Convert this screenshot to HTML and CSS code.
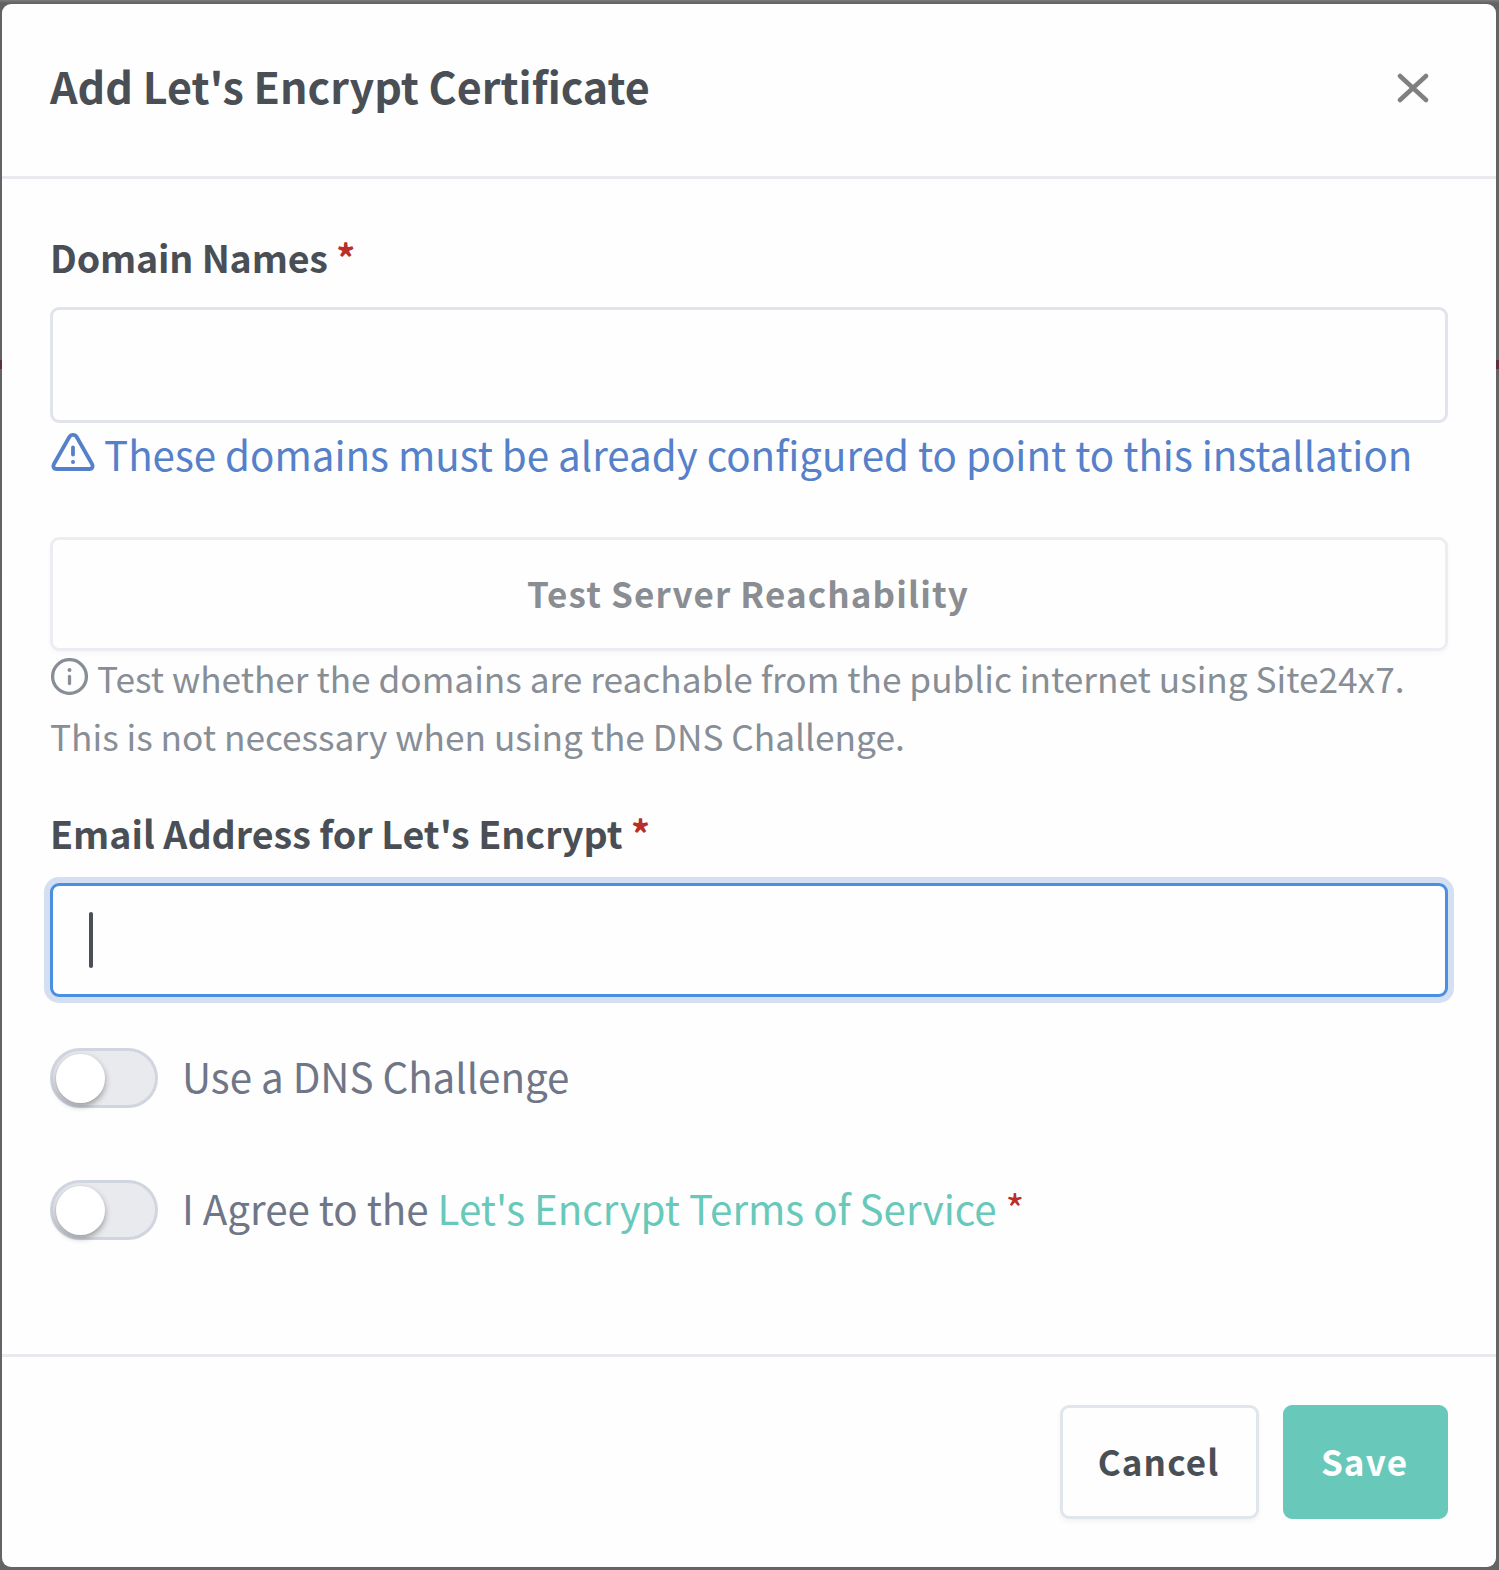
FILE: index.html
```html
<!DOCTYPE html>
<html lang="en">
<head>
<meta charset="utf-8">
<title>Add Let's Encrypt Certificate</title>
<link rel="stylesheet" href="styles.css">
</head>
<body>
<main class="dialog">
  <header class="dialog-header">
    <h1 class="dialog-title">Add Let's Encrypt Certificate</h1>
    <svg class="close" viewBox="0 0 32 30" aria-label="Close"><path d="M3 3 29 27M29 3 3 27"/></svg>
  </header>
  <section class="dialog-body">
    <div class="label label-domains">Domain Names <span class="required">*</span></div>
    <div class="input"></div>
    <p class="warning"><svg class="warning-icon" viewBox="0 0 44 39"><path d="M18.3 4 3.1 30.8C1.6 33.4 2.7 36 5.5 36H38.5C41.3 36 42.4 33.4 40.9 30.8L25.7 4C24 1.2 20 1.2 18.3 4Z"/><path d="M22 14.5V21.5"/><circle cx="22" cy="29" r="2"/></svg><span>These domains must be already configured to point to this installation</span></p>
    <div class="button button-wide">Test Server Reachability</div>
    <p class="help"><svg class="info-icon" viewBox="0 0 37 37"><circle class="ring" cx="18.5" cy="18.5" r="16.9"/><path d="M18.5 18.5V25.5"/><circle class="dot" cx="18.5" cy="12" r="2"/></svg>Test whether the domains are reachable from the public internet using Site24x7.<br>This is not necessary when using the DNS Challenge.</p>
    <div class="label label-email">Email Address for Let's Encrypt <span class="required">*</span></div>
    <div class="input input-focus"><span class="caret"></span></div>
    <div class="toggle-row"><span class="toggle"><span class="knob"></span></span><span class="toggle-label">Use a DNS Challenge</span></div>
    <div class="toggle-row"><span class="toggle"><span class="knob"></span></span><span class="toggle-label">I Agree to the <a class="link">Let's Encrypt Terms of Service</a> <span class="required">*</span></span></div>
  </section>
  <footer class="dialog-footer">
    <div class="button button-cancel">Cancel</div>
    <div class="button button-save">Save</div>
  </footer>
</main>
</body>
</html>
```
FILE: styles.css
```css
* { box-sizing: border-box; }
body {
  margin: 0;
  height: 1570px;
  padding: 4px 3px 3px 2px;
  overflow: hidden;
  background:
    linear-gradient(#5e2f42, #5e2f42) 0 360px / 100% 9px no-repeat,
    linear-gradient(#7c7c7c 0, #636363 3px, #646464 100%);
  font-family: "Noto Sans CJK SC", "Noto Sans", sans-serif;
  color: #4a4f56;
}
h1, p { margin: 0; font-weight: 400; }
.dialog {
  height: 1563px;
  display: flex;
  flex-direction: column;
  background: #fefefe;
  border-radius: 9px;
}
.dialog-header {
  height: 175px;
  padding: 50px 67px 0 48px;
  display: flex;
  justify-content: space-between;
  border-bottom: 3px solid #e9eaee;
}
.dialog-title { font-size: 43px; line-height: 62px; font-weight: 700; white-space: nowrap; }
.close {
  width: 32px;
  height: 30px;
  margin-top: 19px;
  fill: none;
  stroke: #808080;
  stroke-width: 4.5;
  stroke-linecap: round;
}
.dialog-body { height: 1175px; padding: 47px 48px 0; }
.label { font-size: 37.6px; line-height: 61px; font-weight: 700; margin-bottom: 20px; white-space: nowrap; }
.label-domains { letter-spacing: -.17px; }
.label-email { margin-top: 37px; }
.required { color: #b92e28; }
.input {
  height: 116px;
  border: 3px solid #e1e5eb;
  border-radius: 9px;
  background: #fefefe;
}
.input-focus {
  height: 114px;
  padding: 26px 36px;
  border-color: #4a90e2;
  box-shadow: 0 0 0 6px #d5dff2;
}
.caret { display: block; width: 4px; height: 56px; border-radius: 2px; background: #4a4f56; }
.warning {
  margin-top: 1px;
  display: flex;
  gap: 9.5px;
  font-size: 40.3px;
  line-height: 59px;
  letter-spacing: -.012px;
  color: #5580ca;
  white-space: nowrap;
}
.warning-icon { width: 44px; height: 39px; margin: 9px 0 0 .5px; flex: none; fill: none; stroke: currentColor; stroke-width: 3.8; stroke-linecap: round; stroke-linejoin: round; }
.warning-icon circle { fill: currentColor; stroke: none; }
.button {
  height: 114px;
  display: flex;
  align-items: center;
  justify-content: center;
  padding: 0 2px 3px 0;
  border: 3px solid #e1e5ec;
  border-radius: 9px;
  font-size: 35px;
  line-height: 51px;
  font-weight: 700;
  letter-spacing: 1.125px;
  box-shadow: 0 3px 4px rgba(40, 50, 80, .05);
}
.button-wide { margin-top: 54px; border-color: #ecedf3; color: #8a8d92; box-shadow: 0 3px 4px rgba(40, 50, 80, .03); }
.help {
  margin-top: -2px;
  font-size: 35.25px;
  line-height: 58px;
  letter-spacing: -.01px;
  color: #878e96;
  white-space: nowrap;
}
.info-icon { display: inline-block; width: 37px; height: 37px; margin: 0 9px 0 1px; vertical-align: -2px; fill: none; stroke: currentColor; stroke-width: 3.3; stroke-linecap: round; }
.info-icon .dot { fill: currentColor; stroke: none; }
.toggle-row {
  height: 60px;
  margin-top: 51px;
  display: flex;
  gap: 24px;
  align-items: flex-start;
}
.toggle-row + .toggle-row { margin-top: 72px; }
.toggle { width: 108px; height: 60px; padding: 2.5px; border: 3px solid #d0d5e0; border-radius: 30px; background: #e9eaee; }
.knob { display: block; width: 49px; height: 49px; border-radius: 50%; background: #fff; box-shadow: 0 3px 6px rgba(0, 0, 0, .36); }
.toggle-label { font-size: 40.3px; line-height: 55px; letter-spacing: -.025px; color: #6f7687; white-space: nowrap; }
.link { color: #68c9ba; }
.dialog-footer {
  height: 213px;
  padding: 48px;
  display: flex;
  justify-content: flex-end;
  gap: 24px;
  border-top: 3px solid #e9eaee;
}
.button-cancel { width: 199px; }
.button-save { width: 165px; border-color: #68c9ba; background: #68c9ba; color: #fff; box-shadow: none; }
```
